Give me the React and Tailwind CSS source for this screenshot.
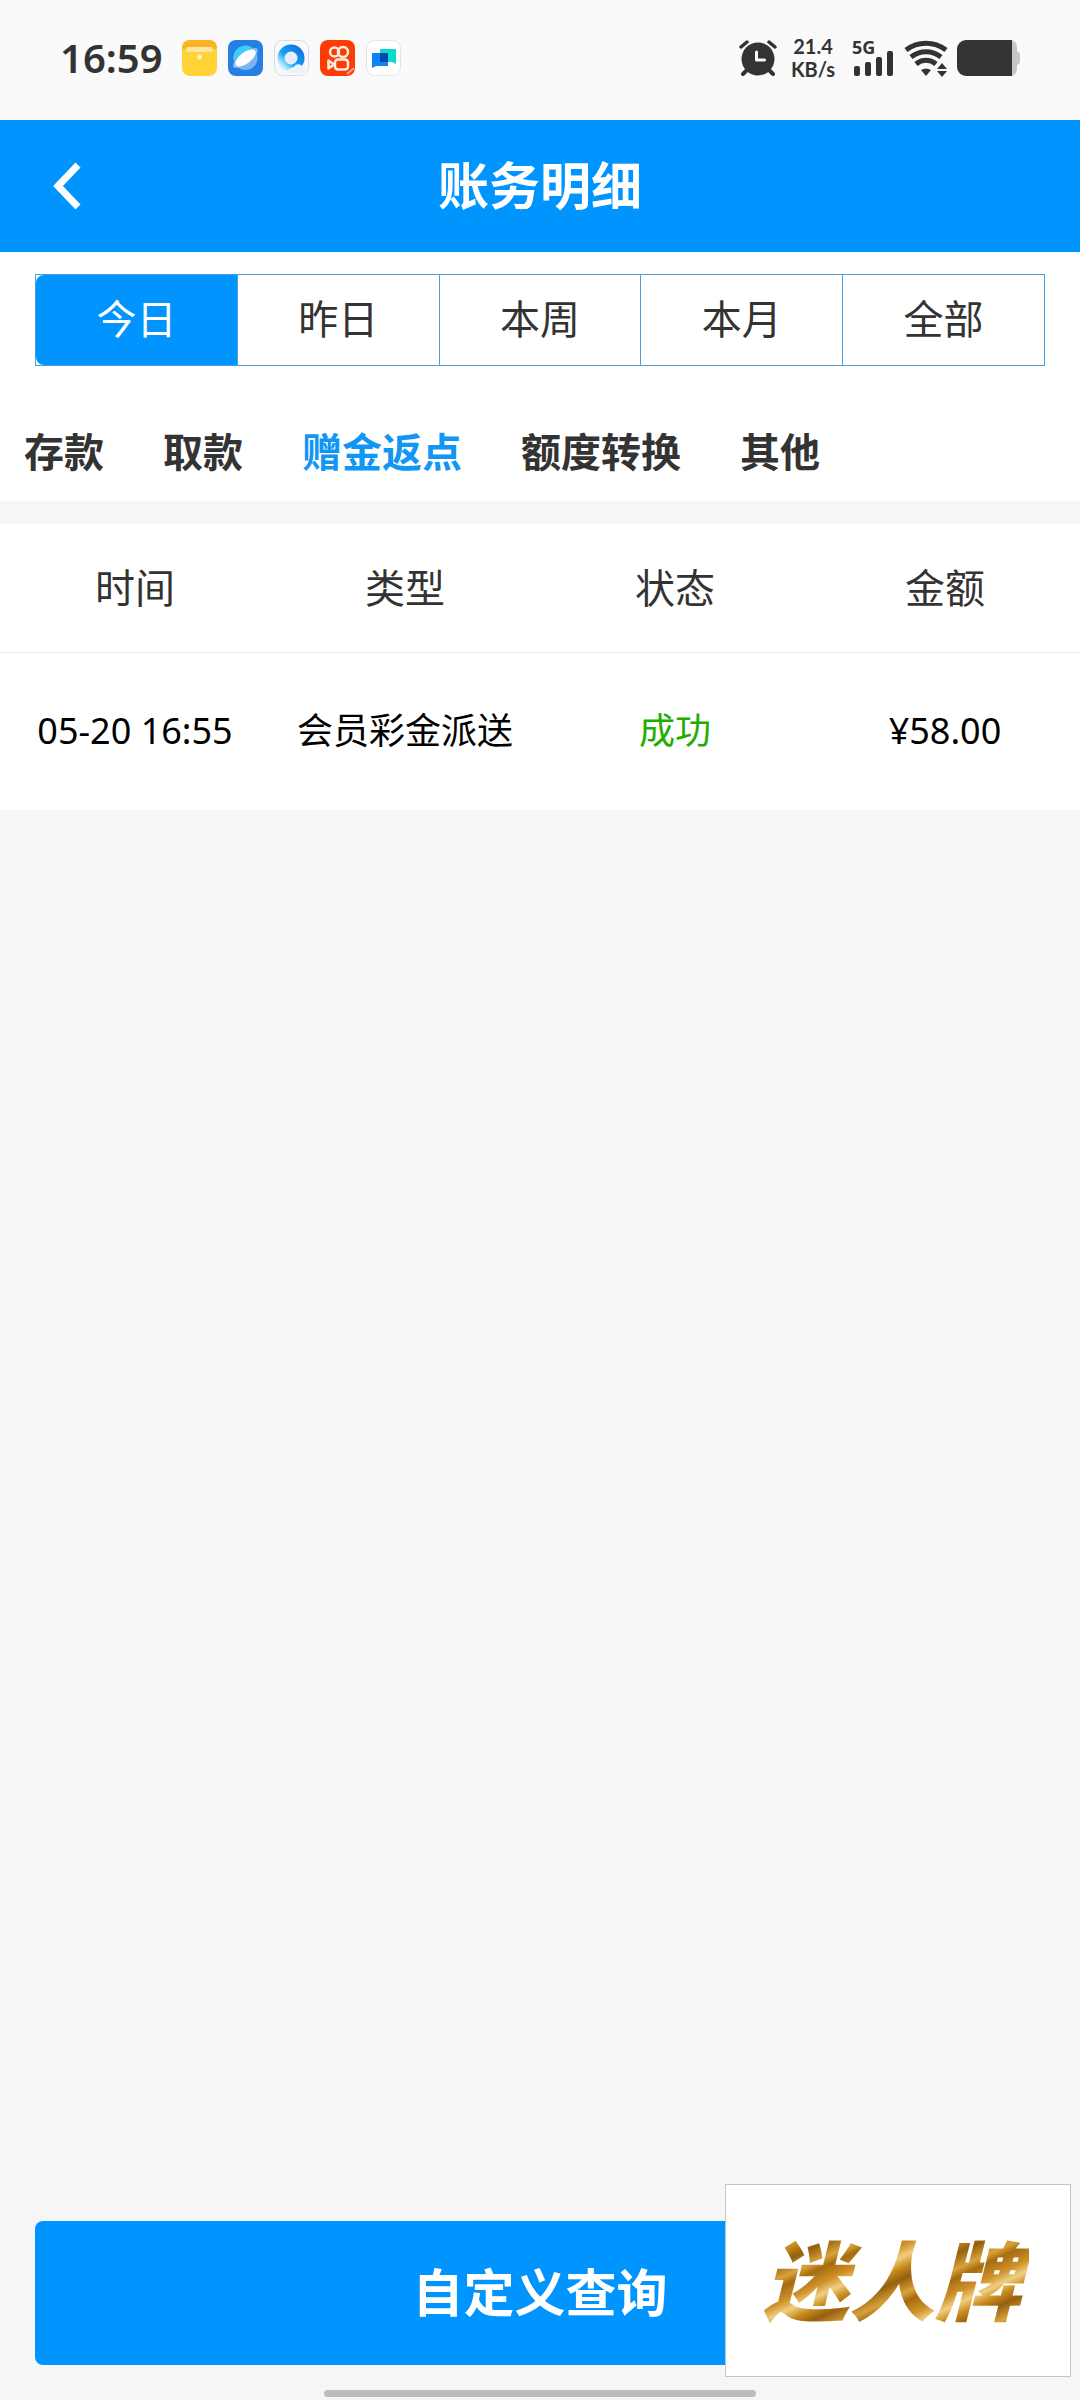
import React, { useState } from "react";

const ranges = ["今日", "昨日", "本周", "本月", "全部"];

const categories = ["存款", "取款", "赠金返点", "额度转换", "其他"];

const columns = ["时间", "类型", "状态", "金额"];

const records = [
  { time: "05-20 16:55", type: "会员彩金派送", status: "成功", amount: "¥58.00" },
];

const App = () => {

  const [range, setRange] = useState("今日");
  const [category, setCategory] = useState("赠金返点");

  return (

    <div className="relative flex min-h-screen flex-col bg-[#f4f6f8] font-['Noto_Sans','Noto_Sans_CJK_SC',sans-serif] text-[#333333]">

      <StatusBar />

      {/* ===============================
         TITLE BAR
      =============================== */}

      <header className="grid h-33 grid-cols-[1fr_auto_1fr] items-center bg-[#0094ff] pb-[2px] text-white">

        <button aria-label="返回" className="flex h-full w-33 items-center pl-[52px]">
          <svg width="30" height="48" viewBox="0 0 30 48" fill="none" stroke="currentColor" strokeWidth="7">
            <path d="M26 4 L6 25 L26 46" />
          </svg>
        </button>

        <h1 className="text-[51px] leading-[60px] font-bold">账务明细</h1>

      </header>

      {/* ===============================
         FILTERS
      =============================== */}

      <div className="bg-white px-[35px] pt-[22px]">

        <div className="flex border border-[#4a9fe0]">

          {ranges.map((item) => (
            <button
              key={item}
              onClick={() => setRange(item)}
              className={`h-[90px] flex-1 border-l border-[#4a9fe0] pb-[2px] text-[40px] leading-[48px] first:border-l-0 ${
                range === item ? "rounded-l-lg bg-[#0094ff] text-white" : "bg-white"
              }`}
            >
              {item}
            </button>
          ))}

        </div>

      </div>

      <nav className="flex h-[135px] items-center gap-[59px] bg-white px-6 pt-9">

        {categories.map((item) => (
          <button
            key={item}
            onClick={() => setCategory(item)}
            className={`text-[40px] leading-[48px] font-bold ${
              category === item ? "text-[#1296f3]" : ""
            }`}
          >
            {item}
          </button>
        ))}

      </nav>

      {/* ===============================
         RECORDS
      =============================== */}

      <table className="mt-[23px] w-full table-fixed bg-white text-center">

        <thead>
          <tr className="h-[128px] border-b border-[#ececee]">
            {columns.map((name) => (
              <th key={name} className="p-0 text-[40px] leading-[48px] font-normal">
                {name}
              </th>
            ))}
          </tr>
        </thead>

        <tbody>
          {records.map((row) => (
            <tr key={row.time} className="h-[158px] text-[36px] leading-[48px] whitespace-nowrap text-black">
              <td className="p-0">{row.time}</td>
              <td className="p-0">{row.type}</td>
              <td className="p-0 text-[#22ac00]">{row.status}</td>
              <td className="p-0">{row.amount}</td>
            </tr>
          ))}
        </tbody>

      </table>

      {/* ===============================
         FOOTER
      =============================== */}

      <footer className="mt-auto flex flex-col items-center px-[35px] pb-[3px]">

        <button className="h-36 w-full rounded-lg bg-[#0094ff] pb-[2px] text-[51px] leading-[60px] font-bold text-white">
          自定义查询
        </button>

        <div className="mt-[25px] h-[7px] w-[432px] rounded-full bg-[#bbbcbc]" />

      </footer>

      <Watermark />

    </div>

  );

};

export default App;



/* ===============================
   STATUS BAR
=============================== */

const StatusBar = () => (

  <div className="flex h-30 items-center justify-between bg-[#fafafa] pr-15 pl-15 pb-1">

    <div className="flex items-center gap-[11px]">

      <span className="mr-2 text-[40px] leading-[48px] font-semibold">16:59</span>

      {/* files */}
      <svg width="35" height="36" viewBox="0 0 35 36">
        <rect width="35" height="36" rx="8" fill="#ffd335" />
        <path d="M0 9 V8 A8 8 0 0 1 8 0 H27 A8 8 0 0 1 35 8 V9 Z" fill="#fbb324" />
        <rect x="4" y="7" width="27" height="5" rx="2" fill="#ffe6a0" />
        <circle cx="17.500" cy="17" r="2.500" fill="#fff4cf" />
      </svg>

      {/* browser */}
      <svg width="35" height="36" viewBox="0 0 35 36">
        <rect width="35" height="36" rx="8" fill="#2680e3" />
        <circle cx="17.500" cy="18" r="12" fill="#7db5f4" />
        <path d="M6 21 A12 12 0 0 1 26 9 Z" fill="#3ccdf8" />
        <ellipse cx="17.500" cy="18" rx="15" ry="5" transform="rotate(-37 17.500 18)" fill="#8dbdf3" />
        <ellipse cx="17.500" cy="18" rx="12" ry="5.500" transform="rotate(-37 17.500 18)" fill="#ffffff" />
      </svg>

      {/* QQ browser */}
      <svg width="35" height="36" viewBox="0 0 35 36">
        <defs>
          <linearGradient id="ring" x1="0" y1="1" x2="1" y2="0">
            <stop offset="0.100" stopColor="#b9effc" />
            <stop offset="0.400" stopColor="#1aa5f2" />
            <stop offset="1" stopColor="#0d6fe0" />
          </linearGradient>
        </defs>
        <rect x="0.500" y="0.500" width="34" height="35" rx="8" fill="#f7f9fc" stroke="#dadde2" />
        <circle cx="17" cy="18" r="10" fill="#e8eef6" stroke="url(#ring)" strokeWidth="7" />
        <path d="M12 32 C14 28 18 28 20 27 C22 23 28 24 28 27 C33 27 33 33 28 33 H12 Z" fill="#edf2fa" />
      </svg>

      {/* video */}
      <svg width="35" height="36" viewBox="0 0 35 36">
        <rect width="35" height="36" rx="8" fill="#fc3c05" />
        <g fill="none" stroke="#ffece0" strokeWidth="2.500">
          <circle cx="14.500" cy="12" r="4.500" />
          <circle cx="23" cy="12" r="5" />
          <rect x="15" y="19.500" width="13" height="10" rx="3" />
          <path d="M14 24.500 L8.500 20.500 V28.500 Z" strokeLinejoin="round" />
        </g>
        <path d="M27 34 L34 28" stroke="#fda58a" strokeWidth="2" />
      </svg>

      {/* chat */}
      <svg width="35" height="36" viewBox="0 0 35 36">
        <rect x="0.500" y="0.500" width="34" height="35" rx="8" fill="#ffffff" stroke="#e2e4e6" />
        <path d="M15 9 H29 Q30 9 30 10 V24 L26 22 H14 V10 Q14 9 15 9 Z" fill="#0cd9cf" />
        <path d="M7 13 H21 Q22 13 22 14 V26 H10 L6 28 V14 Q6 13 7 13 Z" fill="#0b84fb" />
        <path d="M14 13 H21 Q22 13 22 14 V22 H14 Z" fill="#0648a8" />
      </svg>

    </div>

    <div className="flex items-center">

      {/* alarm */}
      <svg width="38" height="36" viewBox="0 0 38 36" fill="none" stroke="#333333" strokeLinecap="round">
        <circle cx="19" cy="19" r="16.500" fill="#333333" stroke="none" />
        <path d="M2 7 L8 2 M30 2 L36 7" strokeWidth="3.500" />
        <path d="M7 31 L4 34 M31 31 L34 34" strokeWidth="4" />
        <path d="M17.500 12 V20 H25.500" stroke="#fafafa" strokeWidth="3" strokeLinejoin="round" />
      </svg>

      <div className="ml-[13px] w-[46px] text-center font-['Lato',sans-serif] text-[20px] leading-[23px] font-bold">
        <div>21.4</div>
        <div>KB/s</div>
      </div>

      {/* signal */}
      <div className="relative ml-4">
        <svg width="42" height="36" viewBox="0 0 42 36" fill="#333333">
          <rect x="2" y="26" width="6" height="10" rx="2" />
          <rect x="13" y="22" width="6" height="14" rx="2" />
          <rect x="24" y="17" width="6" height="19" rx="2" />
          <rect x="35" y="11" width="6" height="25" rx="2" />
        </svg>
        <span className="absolute -top-1 left-0 text-[18px] leading-[22px] font-bold">5G</span>
      </div>

      {/* wifi */}
      <svg className="ml-[10px]" width="44" height="37" viewBox="0 0 44 37" fill="none" stroke="#333333" strokeWidth="5">
        <path d="M2 10 C14 1 30 1 42 10" />
        <path d="M7 17 C16 10 28 10 37 17" />
        <path d="M12 24 C18 19 26 19 32 24" />
        <path d="M17 30 Q22 27 27 30 L22 36 Z" fill="#333333" stroke="none" />
        <path d="M33 29 L38 23 L43 29 Z M33 31 L38 37 L43 31 Z" fill="#333333" stroke="none" />
      </svg>

      {/* battery */}
      <svg className="ml-[9px]" width="63" height="36" viewBox="0 0 63 36">
        <path d="M50 0 H54 Q60 1 60 8 V11 Q63 12 63 15 V21 Q63 24 60 25 V28 Q60 35 54 36 H50 Z" fill="#c6c6c6" />
        <path d="M9 0 H55 V36 H9 A9 9 0 0 1 0 27 V9 A9 9 0 0 1 9 0 Z" fill="#333333" />
      </svg>

    </div>

  </div>

);



/* ===============================
   WATERMARK
=============================== */

const Watermark = () => (

  <div className="absolute right-[9px] bottom-[23px] flex h-[193px] w-[346px] items-center justify-center border border-[#c3c4c6] bg-white pr-3">

    <span className="bg-[repeating-linear-gradient(155deg,#a56c10_0px,#d0912a_14px,#efcf80_24px,#c98a1c_34px,#94600e_44px,#d9a23a_58px,#a56c10_66px)] bg-clip-text px-2 text-[86px] leading-[110px] font-black text-transparent italic">
      迷人牌
    </span>

  </div>

);
